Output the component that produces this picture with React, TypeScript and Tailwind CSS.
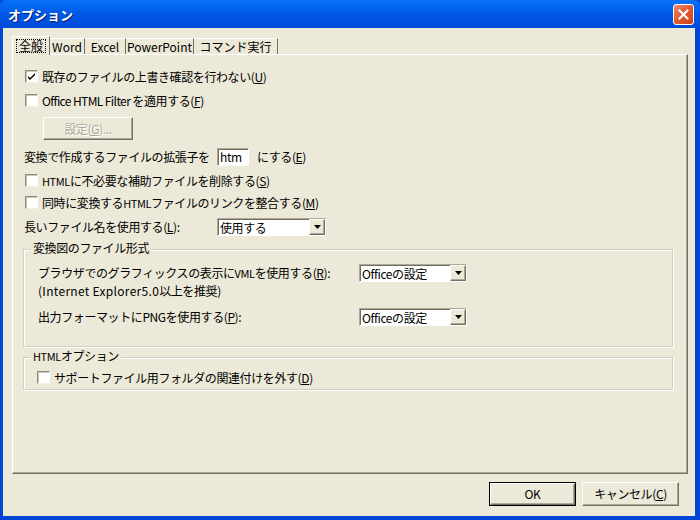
import React from 'react';

const raised =
  'border border-t-white border-l-white border-r-[#716f64] border-b-[#716f64] shadow-[inset_-1px_-1px_0_#aca899]';
const sunken =
  'border border-t-[#aca899] border-l-[#aca899] border-r-white border-b-white shadow-[inset_1px_1px_0_#716f64]';

const Key: React.FC<{ k: string }> = ({ k }) => (
  <>
    (<span className="underline underline-offset-1">{k}</span>)
  </>
);

// narrow latin run, closer to the bitmap UI font of the original
const L: React.FC<{ children: React.ReactNode }> = ({ children }) => (
  <span className="text-[11px] tracking-[-0.4px]">{children}</span>
);

const CheckBox: React.FC<{ checked?: boolean }> = ({ checked }) => (
  <div className="w-[13px] h-[13px] shrink-0 bg-white border border-t-[#8d8b80] border-l-[#8d8b80] border-r-white border-b-[#f1efe2] shadow-[inset_1px_1px_0_#c9c6b6] flex items-center justify-center">
    {checked && (
      <svg width="9" height="9" viewBox="0 0 9 9">
        <path d="M1 4 L3 6 L8 1 L8 3 L3 8 L1 6 Z" fill="#000" />
      </svg>
    )}
  </div>
);

const CheckRow: React.FC<{ checked?: boolean; children: React.ReactNode; className?: string }> = ({
  checked,
  children,
  className = '',
}) => (
  <div className={`flex items-center h-[13px] gap-[4px] ${className}`}>
    <CheckBox checked={checked} />
    <span className="whitespace-nowrap">{children}</span>
  </div>
);

const Combo: React.FC<{ value: string; width: string }> = ({ value, width }) => (
  <div className={`${width} h-[18px] bg-white flex ${sunken}`}>
    <span className="flex-1 pl-[2px] pt-[1px] flex items-center whitespace-nowrap overflow-hidden">{value}</span>
    <div className={`w-[16px] h-full bg-[#ece9d8] flex items-center justify-center ${raised}`}>
      <svg width="7" height="4" viewBox="0 0 7 4">
        <path d="M0 0 H7 L3.5 4 Z" fill="#000" />
      </svg>
    </div>
  </div>
);

const Group: React.FC<{ label: React.ReactNode; className?: string; children: React.ReactNode }> = ({
  label,
  className = '',
  children,
}) => (
  <div className={`relative border border-[#d0d0bf] shadow-[inset_1px_1px_0_#fff,1px_1px_0_#fff] ${className}`}>
    <span className="absolute -top-[8px] left-[7px] px-[2px] bg-[#ece9d8] whitespace-nowrap">{label}</span>
    {children}
  </div>
);

const tabs = [
  { label: '全般', w: 'w-[38px]' },
  { label: 'Word', w: 'w-[35px]' },
  { label: 'Excel', w: 'w-[41px]' },
  { label: 'PowerPoint', w: 'w-[68px]' },
  { label: 'コマンド実行', w: 'w-[84px]' },
];

export default function App() {
  return (
    <div className="w-[700px] h-[520px] flex flex-col bg-[#0047d6] text-[12px] leading-none tracking-[-0.4px] text-black font-['Noto_Sans_CJK_JP',sans-serif] overflow-hidden">
      {/* title bar */}
      <div className="h-[28px] shrink-0 flex items-center justify-between pl-[8px] pr-[6px] bg-gradient-to-b from-[#0a72f8] via-[#0058e6] to-[#0049d8] rounded-t-[6px]">
        <span className="text-white font-bold text-[13px] tracking-normal [text-shadow:1px_1px_0_#0a1e6e]">オプション</span>
        <div className="w-[21px] h-[21px] rounded-[3px] border border-white bg-gradient-to-br from-[#e98a6a] via-[#e0582f] to-[#c8421b] flex items-center justify-center">
          <svg width="11" height="11" viewBox="0 0 11 11">
            <path d="M1.5 1.5 L9.5 9.5 M9.5 1.5 L1.5 9.5" stroke="#fff" strokeWidth="2" strokeLinecap="square" />
          </svg>
        </div>
      </div>

      {/* body */}
      <div className="flex-1 flex flex-col ml-[3px] mr-[5px] mb-[4px] bg-[#ece9d8] pl-[9px] pr-[7px] pt-[8px]">
        {/* tabs */}
        <div className="flex items-end h-[19px] relative z-10 -mb-[1px] tracking-normal">
          {tabs.map((t, i) =>
            i === 0 ? (
              <div
                key={t.label}
                className={`${t.w} h-[19px] bg-[#ece9d8] border-t border-l border-white border-r border-r-[#716f64] flex items-start justify-center pt-[2px]`}
              >
                <span className="border border-dotted border-black px-[2px] h-[14px] flex items-center">{t.label}</span>
              </div>
            ) : (
              <div
                key={t.label}
                className={`${t.w} h-[16px] mb-[1px] border-t border-white border-r border-r-[#716f64] flex items-center justify-center whitespace-nowrap`}
              >
                {t.label}
              </div>
            )
          )}
        </div>

        {/* panel */}
        <div className="h-[420px] border border-t-white border-l-white border-r-[#716f64] border-b-[#716f64] shadow-[inset_-1px_-1px_0_#aca899] pl-[10px] pr-[14px] pt-[15px]">
          <CheckRow checked className="ml-[2px]">
            既存のファイルの上書き確認を行わない<Key k="U" />
          </CheckRow>
          <CheckRow className="ml-[2px] mt-[11px]">
            <span className="tracking-[-0.6px]">Office HTML Filter </span>を適用する<Key k="F" />
          </CheckRow>
          <div
            className={`ml-[20px] mt-[10px] w-[90px] h-[23px] flex items-center justify-center text-[#aca899] [text-shadow:1px_1px_0_#fff] ${raised}`}
          >
            設定<Key k="G" />...
          </div>
          <div className="ml-[1px] mt-[8px] h-[18px] flex items-center">
            <span className="w-[193px] whitespace-nowrap">変換で作成するファイルの拡張子を</span>
            <div className={`w-[32px] h-[18px] bg-white flex items-center pl-[2px] ${sunken}`}>htm</div>
            <span className="ml-[8px] whitespace-nowrap">
              にする<Key k="E" />
            </span>
          </div>
          <CheckRow className="ml-[2px] mt-[8px]">
            <L>HTML</L>に不必要な補助ファイルを削除する<Key k="S" />
          </CheckRow>
          <CheckRow className="ml-[2px] mt-[9px]">
            同時に変換する<L>HTML</L>ファイルのリンクを整合する<Key k="M" />
          </CheckRow>
          <div className="ml-[1px] mt-[9px] h-[18px] flex items-center">
            <span className="w-[193px] whitespace-nowrap">
              長いファイル名を使用する<Key k="L" />:
            </span>
            <Combo value="使用する" width="w-[109px]" />
          </div>

          <Group label="変換図のファイル形式" className="mt-[13px] h-[98px] pl-[14px] pr-[205px] pt-[14px]">
            <div className="flex justify-between">
              <div className="flex flex-col gap-[6px] pt-[3px]">
                <span className="whitespace-nowrap">
                  ブラウザでのグラフィックスの表示に<L>VML</L>を使用する<Key k="R" />:
                </span>
                <span className="whitespace-nowrap">
                  <span className="tracking-[0.3px]">(Internet Explorer5.0</span>以上を推奨)
                </span>
              </div>
              <Combo value="Officeの設定" width="w-[108px]" />
            </div>
            <div className="flex justify-between items-center mt-[11px]">
              <span className="whitespace-nowrap">
                出力フォーマットにPNGを使用する<Key k="P" />:
              </span>
              <Combo value="Officeの設定" width="w-[108px]" />
            </div>
          </Group>

          <Group
            label={
              <>
                <L>HTML</L>オプション
              </>
            }
            className="mt-[10px] h-[33px] pl-[13px] pt-[13px]"
          >
            <CheckRow>
              サポートファイル用フォルダの関連付けを外す<Key k="D" />
            </CheckRow>
          </Group>
        </div>

        {/* buttons */}
        <div className="flex justify-end gap-[6px] mt-[8px] pr-[9px]">
          <div className="w-[87px] h-[24px] border border-black">
            <div className={`w-full h-full flex items-center justify-center ${raised}`}>OK</div>
          </div>
          <div className={`w-[97px] h-[24px] flex items-center justify-center ${raised}`}>
            キャンセル<Key k="C" />
          </div>
        </div>
      </div>
    </div>
  );
}
